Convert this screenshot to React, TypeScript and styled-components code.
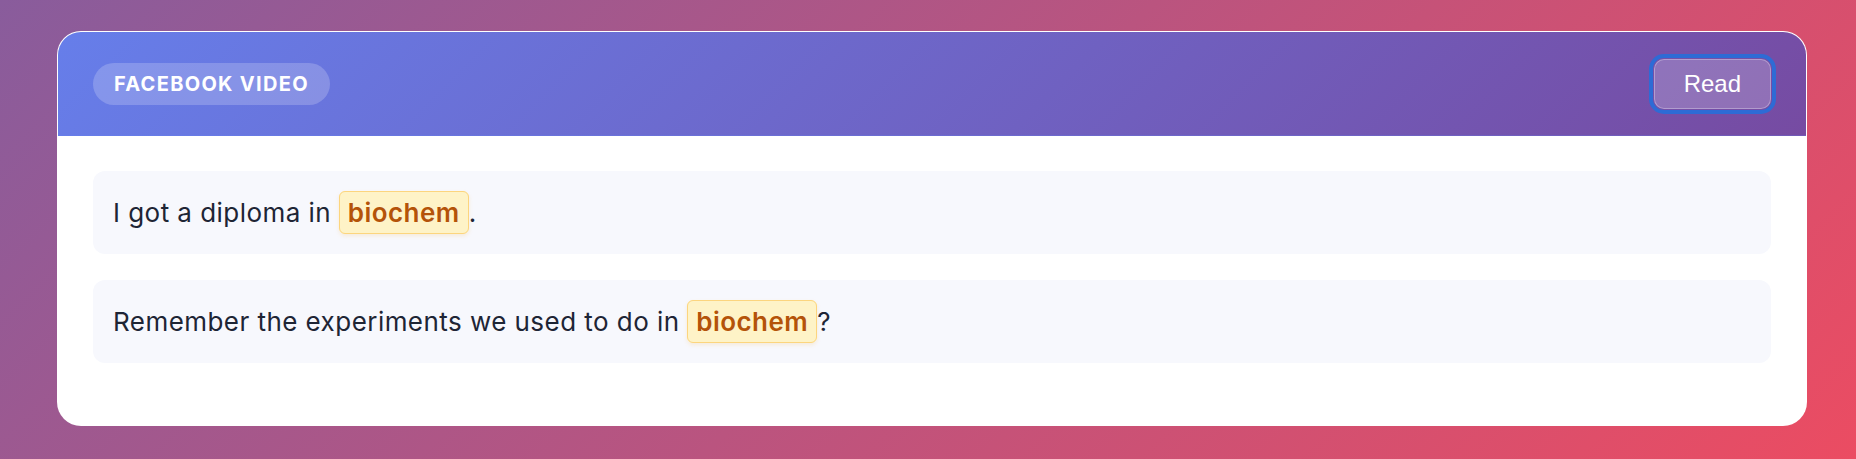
import * as React from "react";
import styled, {createGlobalStyle} from "styled-components";

const GlobalStyle = createGlobalStyle`
    html, body {
        margin: 0;
        padding: 0;
    }
    * {
        box-sizing: border-box;
    }
`;

const Page = styled.div`
    min-height: 459px;
    padding: 31px 49px 32px 57px;
    background: linear-gradient(135deg, #895c9c 0%, #eb4c62 100%);
    font-family: Inter, "Noto Sans", sans-serif;
`;

const Card = styled.div`
    background: #fff;
    border: 1px solid rgba(255, 255, 255, 0.75);
    border-radius: 24px;
    overflow: hidden;
`;

const Header = styled.div`
    height: 104px;
    padding: 0 35px;
    display: flex;
    align-items: center;
    justify-content: space-between;
    background: linear-gradient(135deg, #667eea 0%, #764ba2 100%);
    border-bottom: 1px solid rgba(102, 126, 234, 0.25);
`;

const Badge = styled.span`
    display: inline-block;
    padding: 9px 21px;
    line-height: 24px;
    border-radius: 999px;
    background: rgba(255, 255, 255, 0.2);
    color: #fff;
    font-size: 20px;
    font-weight: 700;
    letter-spacing: 1.3px;
    text-transform: uppercase;
`;

const ReadButton = styled.button`
    padding: 10px 29px;
    line-height: 28px;
    font-family: "Liberation Sans", Arial, sans-serif;
    font-size: 24px;
    color: #fff;
    background: rgba(255, 255, 255, 0.2);
    border: 1px solid rgba(255, 255, 255, 0.3);
    border-radius: 10px;
    outline: 4px solid #2e6bd5;
    outline-offset: 1px;
    cursor: pointer;
`;

const Body = styled.div`
    padding: 35px 35px 36px;
`;

const Sentence = styled.div`
    margin-bottom: 26px;
    padding: 20px 20px;
    line-height: 43px;
    border-radius: 12px;
    background: #f7f8fd;
    color: #1e2535;
    font-size: 26px;
    letter-spacing: 0.45px;
`;

const Term = styled.span`
    padding: 5px 8px;
    border: 1px solid #fcd57e;
    border-radius: 6px;
    background: #fef3c7;
    color: #b45309;
    font-weight: 600;
    box-shadow: 0 2px 4px rgba(245, 158, 11, 0.15);
`;

type Line = {before: string, term: string, after: string};

const lines: Line[] = [
    {before: "I got a diploma in ", term: "biochem", after: "."},
    {before: "Remember the experiments we used to do in ", term: "biochem", after: "?"},
];

export default function App() {
    return <Page>
        <GlobalStyle />
        <Card>
            <Header>
                <Badge>Facebook Video</Badge>
                <ReadButton>Read</ReadButton>
            </Header>
            <Body>
                {lines.map((l, i) => <Sentence key={i}>
                    {l.before}<Term>{l.term}</Term>{l.after}
                </Sentence>)}
            </Body>
        </Card>
    </Page>;
}
